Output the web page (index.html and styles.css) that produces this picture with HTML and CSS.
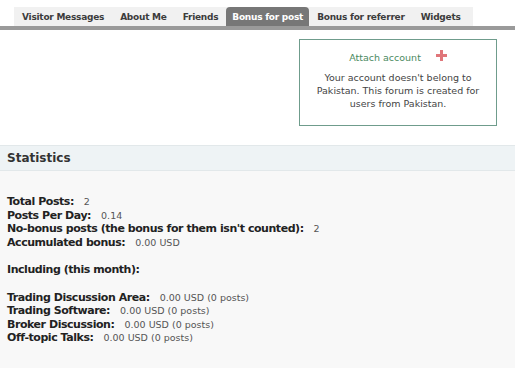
FILE: index.html
```html
<!DOCTYPE html>
<html lang="en">
<head>
    <meta charset="UTF-8">
    <title>Bonus for post</title>
    <link rel="stylesheet" href="styles.css">
</head>
<body>
    <div class="tabs">
        <ul class="tab-list">
            <li class="tab">Visitor Messages</li>
            <li class="tab">About Me</li>
            <li class="tab">Friends</li>
            <li class="tab active">Bonus for post</li>
            <li class="tab">Bonus for referrer</li>
            <li class="tab">Widgets</li>
        </ul>
    </div>

    <div class="top-area">
        <div class="attach-box">
            <div class="attach-head">
                <span class="attach-link">Attach account</span>
                <svg class="plus" width="11" height="11" viewBox="0 0 11 11">
                    <path d="M4 0h3v4h4v3h-4v4h-3v-4h-4v-3h4z" fill="#e0767a"/>
                </svg>
            </div>
            <p class="attach-text">Your account doesn't belong to<br>Pakistan. This forum is created for<br>users from Pakistan.</p>
        </div>
    </div>

    <div class="section">
        <h2 class="section-title">Statistics</h2>
        <div class="stats">
            <div class="stat-group">
                <div class="row"><b>Total Posts:</b><span>2</span></div>
                <div class="row"><b>Posts Per Day:</b><span>0.14</span></div>
                <div class="row"><b>No-bonus posts (the bonus for them isn't counted):</b><span>2</span></div>
                <div class="row"><b>Accumulated bonus:</b><span>0.00 USD</span></div>
            </div>
            <div class="stat-group">
                <div class="row"><b>Including (this month):</b></div>
            </div>
            <div class="stat-group">
                <div class="row"><b>Trading Discussion Area:</b><span>0.00 USD (0 posts)</span></div>
                <div class="row"><b>Trading Software:</b><span>0.00 USD (0 posts)</span></div>
                <div class="row"><b>Broker Discussion:</b><span>0.00 USD (0 posts)</span></div>
                <div class="row"><b>Off-topic Talks:</b><span>0.00 USD (0 posts)</span></div>
            </div>
        </div>
    </div>
</body>
</html>
```

FILE: styles.css
```css
html,
body {
    margin: 0;
    height: 100%;
}

body {
    font-family: "DejaVu Sans", Tahoma, sans-serif;
    color: #333;
    background: #fff;
    display: flex;
    flex-direction: column;
}

.tabs {
    padding-top: 7px;
    border-bottom: 4px solid #9a9a9a;
}

.tab-list {
    list-style: none;
    margin: 0 0 0 14px;
    padding: 0;
    display: flex;
    width: 459px;
    background: #f1f1f1;
}

.tab {
    flex-shrink: 0;
    white-space: nowrap;
    font-size: 9px;
    font-weight: bold;
    letter-spacing: -0.25px;
    color: #3c3c3c;
    height: 19px;
    line-height: 20px;
    padding: 0 8px;
}

.tab.active {
    background: #777;
    color: #fff;
    border-radius: 4px 4px 0 0;
    padding: 0 6px;
}

.top-area {
    display: flex;
    justify-content: flex-end;
    padding: 9px 18px 19px 0;
}

.attach-box {
    width: 196px;
    height: 85px;
    border: 1px solid #6f9c8c;
    text-align: center;
    font-size: 9.5px;
    color: #444;
}

.attach-head {
    display: flex;
    justify-content: center;
    align-items: center;
    gap: 15px;
    margin-top: 12px;
}

.attach-link {
    color: #4b8a5f;
}

.plus {
    margin-top: -4px;
}

.attach-text {
    margin: 8px 0 0;
    line-height: 13px;
}

.section {
    flex: 1;
    background: #f8f8f8;
}

.section-title {
    margin: 0;
    font-size: 12px;
    height: 24px;
    line-height: 24px;
    padding-left: 7px;
    background: #eef3f5;
    border-top: 1px solid #e2e8ea;
    border-bottom: 1px solid #e2e8ea;
    color: #333;
}

.stats {
    padding: 24px 7px 0;
}

.stat-group {
    margin-bottom: 14px;
}

.row {
    font-size: 11px;
    line-height: 13.5px;
    height: 13.5px;
}

.row b {
    color: #222;
    letter-spacing: -0.45px;
}

.row span {
    font-size: 9.5px;
    line-height: 1;
    color: #555;
    margin-left: 10px;
}
```
